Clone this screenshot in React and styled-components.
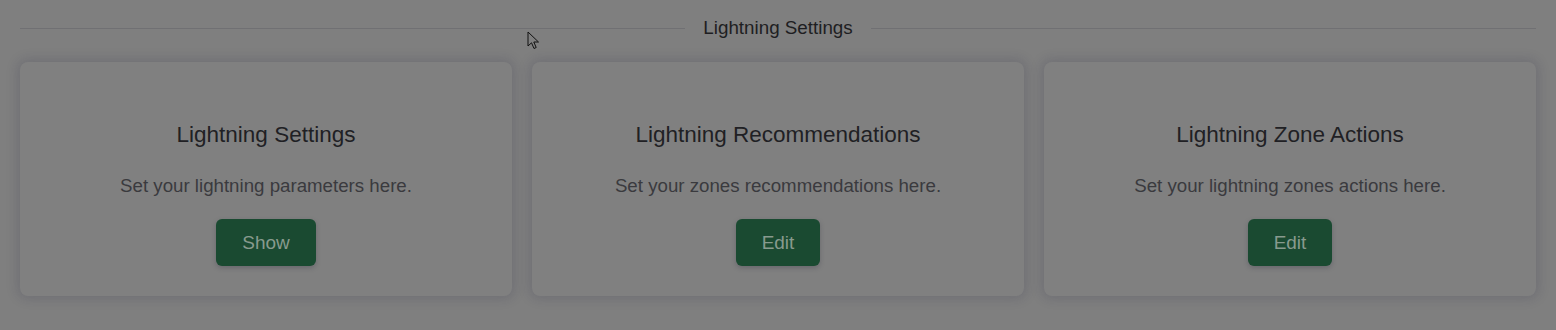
import React from 'react';
import styled, { createGlobalStyle } from 'styled-components';

const GlobalStyle = createGlobalStyle`
  body {
    margin: 0;
    background: #7f7f7f;
    font-family: 'Liberation Sans', Arial, sans-serif;
  }
`;

const cards = [
  { title: 'Lightning Settings', text: 'Set your lightning parameters here.', action: 'Show' },
  { title: 'Lightning Recommendations', text: 'Set your zones recommendations here.', action: 'Edit' },
  { title: 'Lightning Zone Actions', text: 'Set your lightning zones actions here.', action: 'Edit' },
];

function Cursor() {
  return (
    <CursorWrap width="14" height="20" viewBox="0 0 14 20">
      <path d="M1 1 L1 15 L4.5 11.8 L7 17.5 L9.2 16.5 L6.8 11 L11.5 11 Z" fill="#7f7f7f" stroke="#111" strokeWidth="1" strokeLinejoin="round" />
    </CursorWrap>
  );
}

function App() {
  return (
    <>
      <GlobalStyle />
      <Page>
        <Divider>
          <DividerLine />
          <DividerText>Lightning Settings</DividerText>
          <DividerLine />
        </Divider>
        <Grid>
          {cards.map((c) => (
            <Card key={c.title}>
              <CardTitle>{c.title}</CardTitle>
              <CardText>{c.text}</CardText>
              <Button>{c.action}</Button>
            </Card>
          ))}
        </Grid>
        <Cursor />
      </Page>
    </>
  );
}

export default App;

const Page = styled.div`
  position: relative;
  padding: 18px 20px 34px;
  min-height: 330px;
  box-sizing: border-box;
`;

const Divider = styled.div`
  display: flex;
  align-items: center;
  gap: 18px;
  height: 20px;
  margin-bottom: 24px;
`;

const DividerLine = styled.div`
  flex: 1;
  height: 1px;
  background: #707073;
`;

const DividerText = styled.span`
  font-size: 18.8px;
  line-height: 20px;
  color: #1e1e22;
`;

const Grid = styled.div`
  display: grid;
  grid-template-columns: repeat(3, 1fr);
  gap: 20px;
`;

const Card = styled.div`
  display: flex;
  flex-direction: column;
  align-items: center;
  padding: 60px 20px 30px;
  background: #808080;
  border-radius: 8px;
  box-shadow: 0 0 12px 3px rgba(30, 30, 60, 0.16);
`;

const CardTitle = styled.h3`
  margin: 0;
  font-size: 22.5px;
  font-weight: 400;
  line-height: 26px;
  color: #202024;
`;

const CardText = styled.p`
  margin: 25px 0 0;
  font-size: 18.7px;
  line-height: 26px;
  color: #3a3a3e;
`;

const Button = styled.button`
  margin-top: 20px;
  height: 47px;
  padding: 0 26px;
  border: none;
  border-radius: 6px;
  background: #1a4a31;
  color: #889a8e;
  font-family: 'Liberation Sans', Arial, sans-serif;
  font-size: 19px;
  box-shadow: 0 2px 5px rgba(30, 30, 50, 0.25);
  cursor: pointer;
`;

const CursorWrap = styled.svg`
  position: absolute;
  left: 527px;
  top: 31px;
`;
